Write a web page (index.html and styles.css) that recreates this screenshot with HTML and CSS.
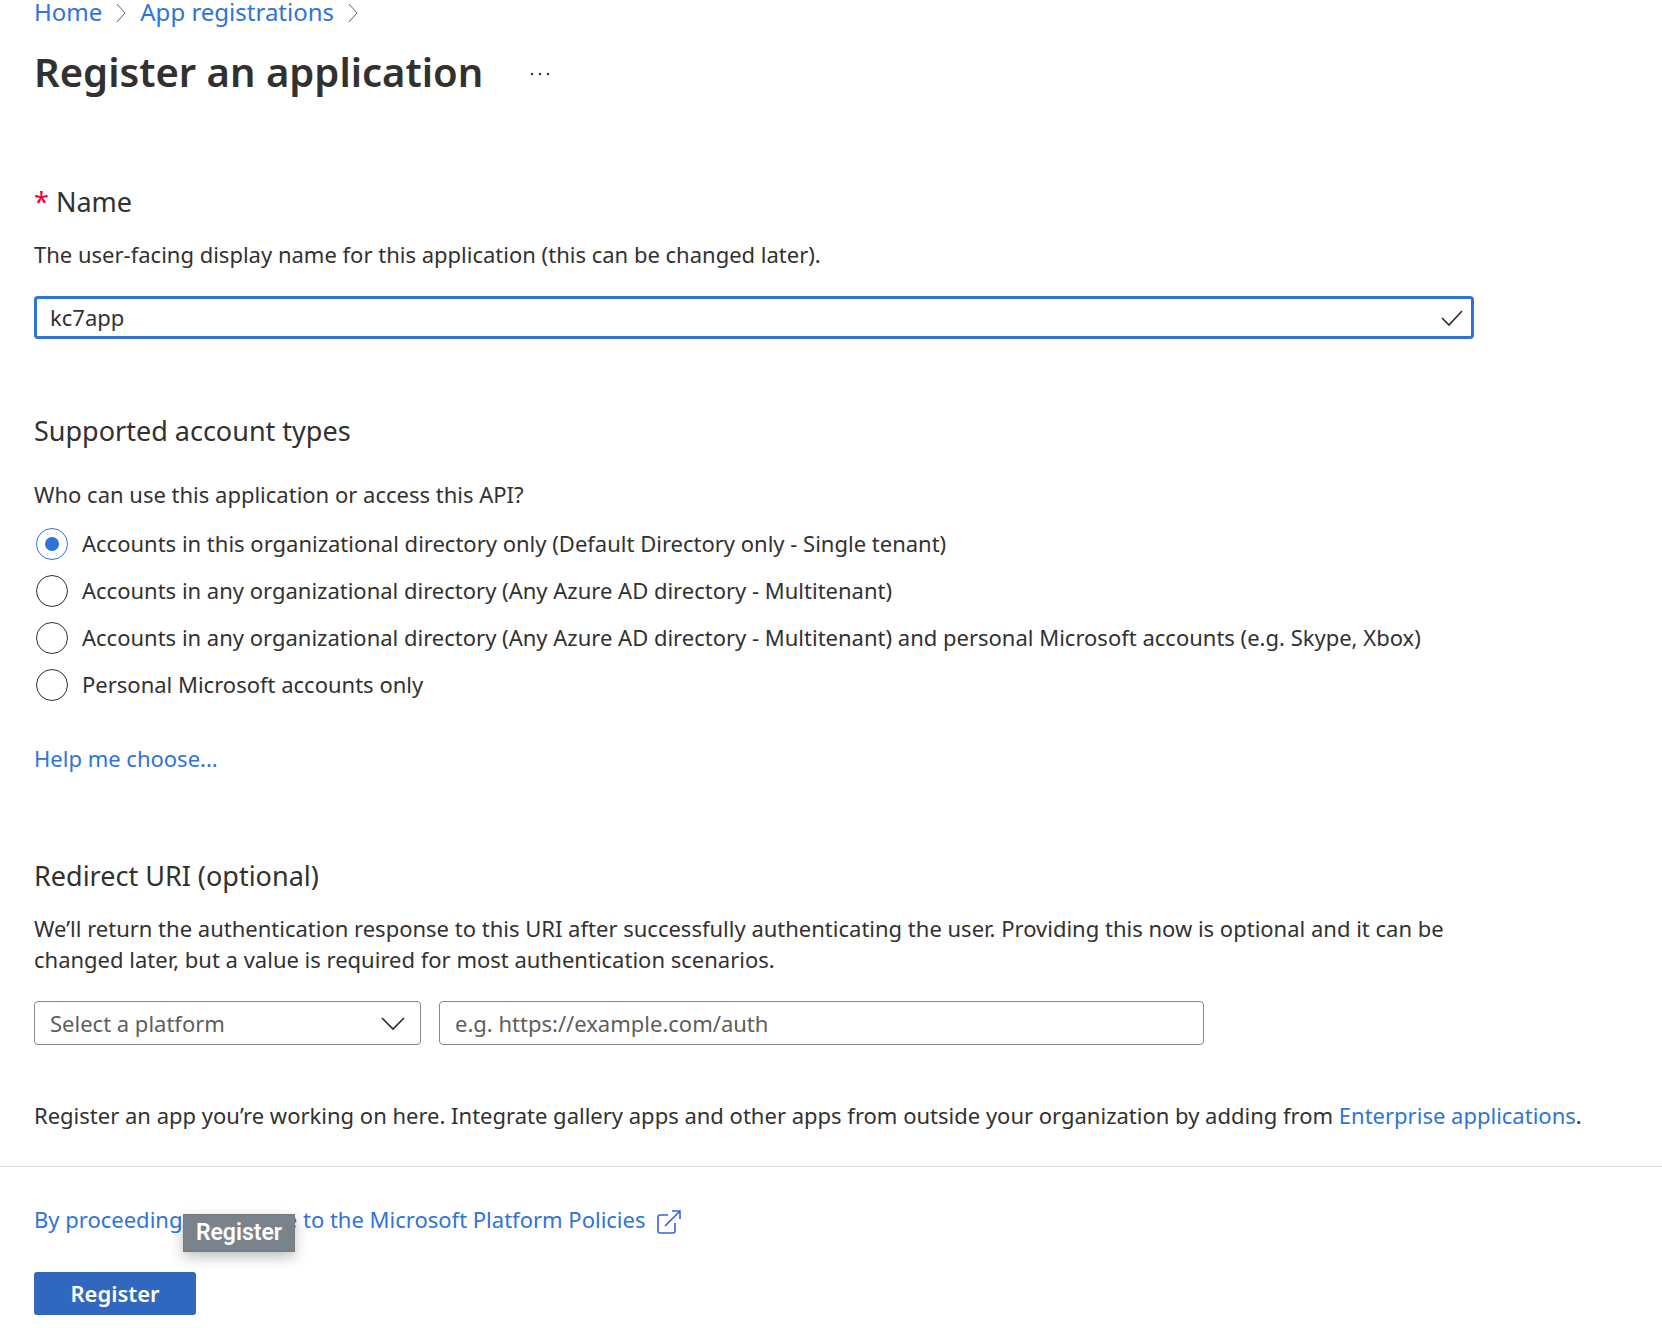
FILE: index.html
```html
<!DOCTYPE html>
<html lang="en">
<head>
<meta charset="utf-8">
<meta name="viewport" content="width=device-width, initial-scale=1">
<title>Register an application</title>
<link rel="stylesheet" href="styles.css">
</head>
<body>
<header class="header">
  <nav class="breadcrumb" aria-label="Breadcrumb">
    <a class="link" href="#">Home</a>
    <svg class="crumb-sep" viewBox="0 0 10 20" aria-hidden="true"><path d="M1 1l8 9-8 9"/></svg>
    <a class="link" href="#">App registrations</a>
    <svg class="crumb-sep" viewBox="0 0 10 20" aria-hidden="true"><path d="M1 1l8 9-8 9"/></svg>
  </nav>
  <div class="title-row">
    <h1 class="title">Register an application</h1>
    <button class="more" type="button" aria-label="More actions">
      <svg viewBox="0 0 22 4" aria-hidden="true"><circle cx="3" cy="2" r="1.2"/><circle cx="11" cy="2" r="1.2"/><circle cx="19" cy="2" r="1.2"/></svg>
    </button>
  </div>
</header>

<form class="form">
  <main class="content">
    <section class="section">
      <label class="heading" for="name"><span class="required">*</span> Name</label>
      <p class="text">The user-facing display name for this application (this can be changed later).</p>
      <div class="name-field">
        <input class="input input-active" id="name" type="text" value="kc7app">
        <svg class="check" viewBox="0 0 22 16" aria-hidden="true"><path d="M1 8l7 7L21 1"/></svg>
      </div>
    </section>

    <section class="section accounts">
      <h2 class="heading">Supported account types</h2>
      <fieldset class="choices">
        <legend class="text">Who can use this application or access this API?</legend>
        <label class="choice"><input class="radio" type="radio" name="accounts" checked>Accounts in this organizational directory only (Default Directory only - Single tenant)</label>
        <label class="choice"><input class="radio" type="radio" name="accounts">Accounts in any organizational directory (Any Azure AD directory - Multitenant)</label>
        <label class="choice"><input class="radio" type="radio" name="accounts">Accounts in any organizational directory (Any Azure AD directory - Multitenant) and personal Microsoft accounts (e.g. Skype, Xbox)</label>
        <label class="choice"><input class="radio" type="radio" name="accounts">Personal Microsoft accounts only</label>
      </fieldset>
      <a class="link help" href="#">Help me choose...</a>
    </section>

    <section class="section redirect">
      <h2 class="heading">Redirect URI (optional)</h2>
      <p class="text">We’ll return the authentication response to this URI after successfully authenticating the user. Providing this now is optional and it can be changed later, but a value is required for most authentication scenarios.</p>
      <div class="uri-fields">
        <div class="platform">
          <select class="input select" aria-label="Platform"><option>Select a platform</option></select>
          <svg class="chevron" viewBox="0 0 24 14" aria-hidden="true"><path d="M1 1l11 11L23 1"/></svg>
        </div>
        <input class="input uri" type="text" aria-label="Redirect URI" placeholder="e.g. https://example.com/auth">
      </div>
    </section>
  </main>
  <p class="text note">Register an app you’re working on here. Integrate gallery apps and other apps from outside your organization by adding from <a class="link" href="#">Enterprise applications</a>.</p>

  <footer class="footer">
    <a class="link policies" href="#">By proceeding, you agree to the Microsoft Platform Policies
      <svg class="external" viewBox="0 0 24 24" aria-hidden="true"><path d="M11 5H3a2 2 0 0 0-2 2v14a2 2 0 0 0 2 2h13a2 2 0 0 0 2-2v-8M8 16L23 1M15 1h8v8"/></svg>
    </a>
    <div class="submit">
      <button class="register" type="button" aria-describedby="tip">Register</button>
      <span class="tooltip" id="tip" role="tooltip">Register</span>
    </div>
  </footer>
</form>
</body>
</html>
```
FILE: styles.css
```css
* {
  box-sizing: border-box;
}

body {
  margin: 0;
  background: #fff;
  color: #323130;
  font: 22px/31px "Noto Sans", "Open Sans", sans-serif;
}

h1, h2, p, fieldset, legend {
  margin: 0;
  padding: 0;
  border: 0;
}

svg {
  display: block;
  fill: none;
  stroke: #323130;
}

.link {
  color: #2f74d8;
  text-decoration: none;
}

.header {
  padding: 0 34px;
}

.breadcrumb {
  display: flex;
  align-items: center;
  gap: 14px;
  font-size: 24px;
  line-height: 24px;
}

.crumb-sep {
  width: 10px;
  height: 20px;
  margin-top: 2px;
  stroke: #605e5c;
}

.title-row {
  display: flex;
  align-items: center;
  gap: 42px;
  margin-top: 18px;
}

.title {
  font-size: 40px;
  font-weight: 600;
  line-height: 60px;
}

.more {
  padding: 6px 4px 2px;
  border: 0;
  background: none;
}

.more svg {
  width: 22px;
  height: 4px;
  fill: #323130;
  stroke: none;
}

.form {
  padding-top: 82px;
}

.content {
  max-width: 1508px;
  padding: 0 34px;
}

.section {
  display: flex;
  flex-direction: column;
}

.heading {
  margin-bottom: 19px;
  font-size: 27px;
  font-weight: 400;
  line-height: 36px;
}

.required {
  color: #f0002d;
}

.input {
  width: 100%;
  height: 44px;
  padding: 0 15px;
  border: 1px solid #8a8886;
  border-radius: 4px;
  background: #fff;
  color: #323130;
  font: inherit;
}

.input::placeholder {
  color: #605e5c;
  opacity: 1;
}

.input-active {
  display: block;
  height: 43px;
  padding: 0 48px 2px 13px;
  border: 3px solid #2f74d8;
  outline: 0;
}

.name-field {
  position: relative;
  margin-top: 26px;
}

.check {
  position: absolute;
  top: 14px;
  right: 11px;
  width: 22px;
  height: 16px;
  stroke-width: 1.7;
}

.accounts {
  margin-top: 74px;
}

.choices {
  margin-top: 11px;
}

.choices .text {
  margin-bottom: 10px;
}

.choice {
  display: flex;
  align-items: center;
  gap: 14px;
  min-height: 47px;
  padding-left: 2px;
}

.radio {
  display: grid;
  flex: none;
  place-items: center;
  width: 32px;
  height: 32px;
  margin: 0;
  border: 1px solid #323130;
  border-radius: 50%;
  appearance: none;
}

.radio:checked {
  border-color: #2f74d8;
}

.radio:checked::before {
  width: 14px;
  height: 14px;
  border-radius: 50%;
  background: #2f74d8;
  content: "";
}

.help {
  align-self: flex-start;
  margin-top: 35px;
}

.redirect {
  margin-top: 84px;
}

.uri-fields {
  display: flex;
  gap: 18px;
  max-width: 1170px;
  margin-top: 26px;
}

.platform {
  position: relative;
  flex: 0 1 387px;
}

.select {
  color: #605e5c;
  appearance: none;
}

.chevron {
  position: absolute;
  top: 16px;
  right: 16px;
  width: 24px;
  height: 14px;
  stroke-width: 1.7;
  pointer-events: none;
}

.uri {
  flex: 1;
}

.note {
  padding: 55px 34px 35px;
}

.footer {
  padding: 37px 34px 14px;
  border-top: 1px solid #dcdcdc;
}

.policies {
  display: inline-flex;
  align-items: center;
  gap: 11px;
}

.external {
  width: 24px;
  height: 24px;
  margin-top: 4px;
  stroke: #3b5fe0;
  stroke-width: 1.6;
}

.submit {
  position: relative;
  display: flex;
  margin-top: 37px;
}

.register {
  min-width: 162px;
  height: 43px;
  padding-bottom: 2px;
  border: 0;
  border-radius: 3px;
  background: #3068c0;
  color: #fff;
  font: inherit;
  font-weight: 600;
}

.tooltip {
  position: absolute;
  bottom: 63px;
  left: 149px;
  width: 112px;
  border: 1px solid #777b80;
  background: #7a828b;
  box-shadow: 0 5px 14px rgba(0, 0, 0, 0.25);
  color: #fff;
  font: 600 23px/36px Roboto, sans-serif;
  text-align: center;
}
```
